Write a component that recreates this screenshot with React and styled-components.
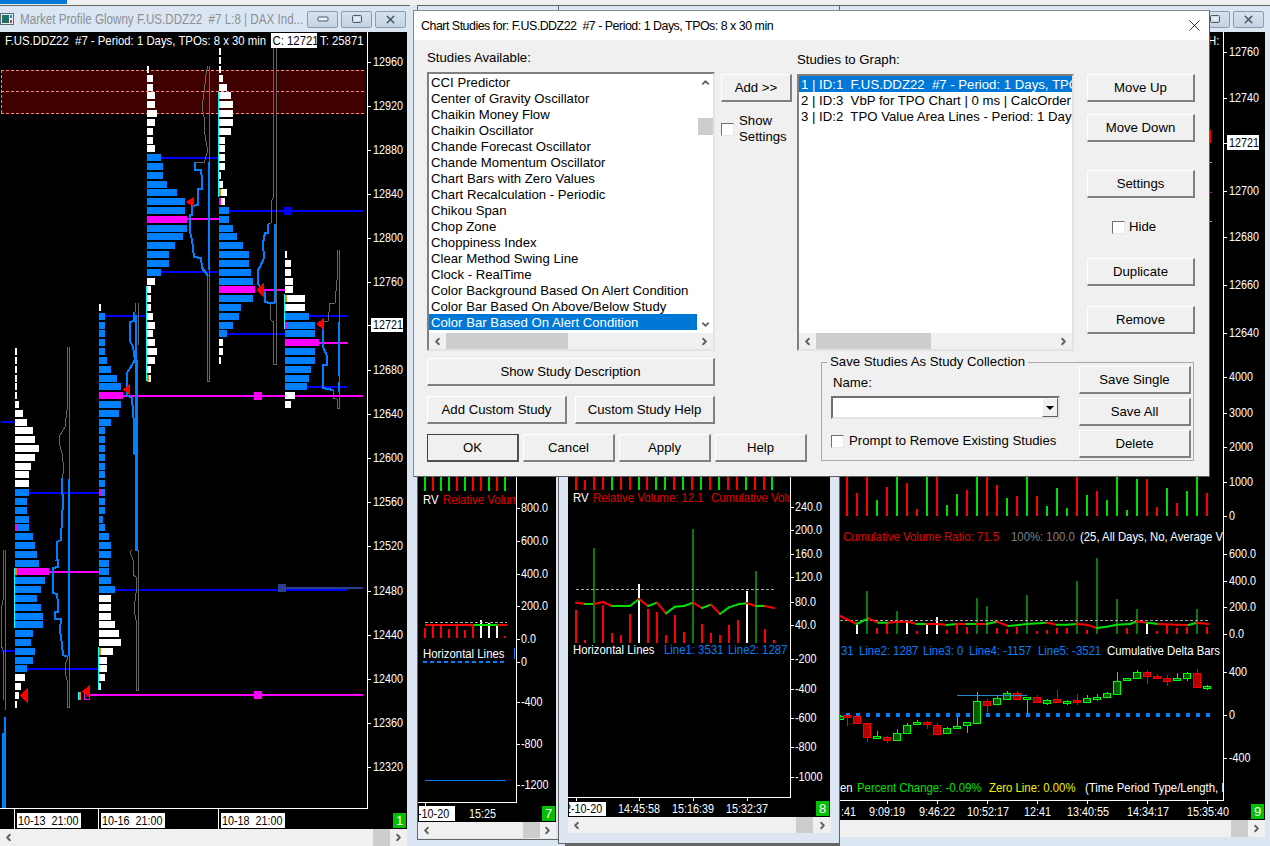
import React from 'react';
import styled, { createGlobalStyle } from 'styled-components';
import { ChevronLeft, ChevronRight, ChevronUp, ChevronDown, X } from 'lucide-react';

const FONT = '"Liberation Sans", Arial, sans-serif';

const GlobalStyle = createGlobalStyle`
    html, body { margin: 0; padding: 0; background: #dbe6f2; overflow: hidden; }
    body { font-family: ${FONT}; font-size: 13px; color: #000; }
    #root { width: 1270px; height: 846px; }
`;

const Desktop = styled.div`
    position: relative;
    width: 1270px;
    height: 846px;
    overflow: hidden;
    background: #dbe6f2;
`;

const TopStrip = styled.div`
    position: absolute;
    left: 0;
    top: 0;
    width: 1270px;
    height: 5px;
    background: #f0f0f0;
    &::before {
        content: '';
        display: block;
        width: 67px;
        height: 4px;
        background: #0078d7;
    }
`;

const Window = styled.div`
    position: absolute;
    left: ${p => p.$x}px;
    top: 5px;
    width: ${p => p.$w}px;
    height: ${p => p.$h}px;
    box-sizing: border-box;
    display: flex;
    flex-direction: column;
    background: #dbe6f2;
    border-top: 1px solid #666;
    border-left: ${p => (p.$edge ? '1px solid #666' : 'none')};
    border-bottom: ${p => (p.$edge ? '1px solid #666' : 'none')};
    padding: 0 ${p => p.$pr || 0}px 0 ${p => p.$pl || 0}px;
`;

const TitleBar = styled.div`
    height: 26px;
    flex: none;
    display: flex;
    align-items: center;
    gap: 6px;
    padding: 0 1px 0 0;
    color: #8b9096;
    font-size: 14px;
    white-space: pre;
    overflow: hidden;
`;

const TitleText = styled.span`
    flex: 1;
    min-width: 0;
    overflow: hidden;
`;

const TitleInner = styled.span`
    display: inline-block;
    transform: scaleX(0.83);
    transform-origin: 0 50%;
`;

const WinButton = styled.div`
    flex: none;
    width: 31px;
    height: 17px;
    box-sizing: border-box;
    display: flex;
    align-items: center;
    justify-content: center;
    margin-left: -3px;
    border: 1px solid #8a9cb0;
    border-radius: 2px;
    background: linear-gradient(#d6e1ee, #c4d3e4);
`;

const ChartSvg = styled.svg`
    flex: none;
    display: block;
    background: #000;
    shape-rendering: crispEdges;
`;

const Txt = styled.text`
    font-family: ${FONT};
    font-size: ${p => p.$s}px;
    fill: ${p => p.$c || '#fff'};
    white-space: pre;
    dominant-baseline: central;
    shape-rendering: auto;
`;

const ScrollH = styled.div`
    flex: none;
    height: ${p => p.$h || 17}px;
    display: flex;
    align-items: stretch;
    background: #f0f0f0;
    color: #606060;
`;

const ScrollArrow = styled.div`
    flex: none;
    width: 17px;
    display: flex;
    align-items: center;
    justify-content: center;
`;

const ScrollTrack = styled.div`
    flex: 1;
    min-width: 0;
    display: flex;
    align-items: stretch;
`;

const ScrollThumb = styled.div`
    flex: none;
    margin-left: ${p => p.$at}px;
    width: ${p => p.$len}px;
    background: #cdcdcd;
`;

const ScrollV = styled.div`
    flex: none;
    width: 15px;
    display: flex;
    flex-direction: column;
    background: #fff;
    color: #606060;
    margin-left: 1px;
`;

const ScrollVArrow = styled.div`
    flex: none;
    height: 17px;
    display: flex;
    align-items: center;
    justify-content: center;
`;

const ScrollVTrack = styled.div`
    flex: 1;
`;

const ScrollVThumb = styled.div`
    margin-top: ${p => p.$at}px;
    height: ${p => p.$len}px;
    background: #cdcdcd;
`;

const Backdrop = styled.div`
    position: absolute;
    left: 565px;
    top: 844px;
    width: 274px;
    height: 2px;
    background: #666;
`;

/* dialog */

const Dialog = styled.div`
    position: absolute;
    left: 413px;
    top: 10px;
    width: 797px;
    height: 467px;
    box-sizing: border-box;
    display: flex;
    flex-direction: column;
    background: #f0f0f0;
    border: 1px solid #5c5c5c;
    border-left-color: #8a8a8a;
    border-top-color: #8a8a8a;
`;

const DialogTitle = styled.div`
    height: 29px;
    flex: none;
    display: flex;
    align-items: center;
    justify-content: space-between;
    padding: 0 5px 0 7px;
    background: #fff;
    font-size: 12.4px;
    letter-spacing: -0.48px;
    white-space: pre;
`;

const DialogBody = styled.div`
    flex: 1;
    display: flex;
    flex-direction: column;
    padding: 10px 14px 0 13px;
    gap: 7px;
`;

const UpperRow = styled.div`
    display: grid;
    grid-template-columns: 294px 76px 290px 108px;
    height: 301px;
`;

const Column = styled.div`
    display: flex;
    flex-direction: column;
    min-width: 0;
    width: ${p => (p.$w ? `${p.$w}px` : 'auto')};
`;

const Label = styled.div`
    font-size: 13.2px;
    line-height: 16px;
    margin: ${p => p.$m || '0'};
    white-space: pre;
`;

const ListFrame = styled.div`
    box-sizing: border-box;
    height: ${p => p.$h}px;
    display: flex;
    flex-direction: column;
    background: #fff;
    border: 2px solid;
    border-color: #808080 #e3e3e3 #e3e3e3 #808080;
`;

const ListMain = styled.div`
    flex: 1;
    min-height: 0;
    display: flex;
`;

const ListItems = styled.div`
    flex: 1;
    min-width: 0;
    overflow: hidden;
`;

const ListItem = styled.div`
    height: 16px;
    line-height: 18px;
    padding-left: 2px;
    white-space: pre;
    overflow: hidden;
    font-size: 13.2px;
    background: ${p => (p.$on ? '#0078d7' : 'transparent')};
    color: ${p => (p.$on ? '#fff' : '#000')};
`;

const Btn = styled.div`
    box-sizing: border-box;
    width: ${p => (p.$w ? `${p.$w}px` : 'auto')};
    height: 28px;
    display: flex;
    align-items: center;
    justify-content: center;
    font-size: 13.2px;
    background: #f0f0f0;
    border: 2px solid;
    border-color: #fff #808080 #808080 #fff;
    border-top-width: 1px;
    border-left-width: 1px;
    margin-top: ${p => p.$mt || 0}px;
    flex: none;
    ${p => p.$def && 'border-color: #404040 #505050 #505050 #404040;'}
`;

const CheckBox = styled.span`
    flex: none;
    width: 11px;
    height: 11px;
    background: #fff;
    border: 1px solid;
    border-color: #707070 #e8e8e8 #e8e8e8 #707070;
`;

const CheckRow = styled.div`
    display: flex;
    align-items: center;
    gap: ${p => p.$gap || 5}px;
    margin: ${p => p.$m || '0'};
    font-size: 13.2px;
    line-height: 16px;
    white-space: pre;
`;

const LowerRow = styled.div`
    display: flex;
    justify-content: space-between;
    padding-right: 1px;
`;

const LowerLeft = styled.div`
    width: 380px;
    display: flex;
    flex-direction: column;
    gap: 10px;
`;

const ButtonRow = styled.div`
    display: flex;
    gap: ${p => p.$gap || 8}px;
`;

const Group = styled.fieldset`
    box-sizing: border-box;
    margin: -3px 0 0;
    width: 373px;
    height: 106px;
    padding: 0 2px 0 10px;
    border: 1px solid #aaa;
    display: flex;
    justify-content: space-between;
    min-width: 0;
`;

const Legend = styled.legend`
    font-size: 13.2px;
    padding: 0 3px;
    margin-left: -5px;
    line-height: 14px;
    white-space: pre;
`;

const GroupLeft = styled.div`
    width: 229px;
    margin-left: -1px;
    display: flex;
    flex-direction: column;
`;

const GroupRight = styled.div`
    width: 112px;
    display: flex;
    flex-direction: column;
    gap: 4px;
    margin-top: -3px;
`;

const Combo = styled.div`
    box-sizing: border-box;
    height: 23px;
    margin-top: 5px;
    display: flex;
    justify-content: flex-end;
    background: #fff;
    border: 2px solid;
    border-color: #707070 #e3e3e3 #e3e3e3 #707070;
`;

const ComboArrow = styled.div`
    width: 16px;
    box-sizing: border-box;
    display: flex;
    align-items: center;
    justify-content: center;
    background: #f0f0f0;
    border: 1px solid;
    border-color: #fff #606060 #606060 #fff;
    &::after {
        content: '';
        border-left: 4px solid transparent;
        border-right: 4px solid transparent;
        border-top: 4px solid #000;
    }
`;

/* chart data, read off the screen at page coordinates */

const BLUE = '#0080ff';
const MAG = '#ff00ff';
const WHITE = '#fff';
const NAVY = '#0000ff';
const CYAN = '#00ffff';
const ORANGE = '#ff8000';
const GRAY = '#666';
const RED = '#ff0000';
const GREEN = '#00e000';
const DKGREEN = '#0a7a0a';
const TXTRED = '#e00000';

const rowY = n => 66 + 8.815 * n;

// the chart text is a tall narrow face: squeeze it sideways
const T = ({ x, y, c, children }) => (
    <Txt transform={`translate(${x} ${y}) scale(0.855 1)`} $c={c} $s={13.3}>{children}</Txt>
);

const N = ({ x, y, c, children }) => (
    <Txt transform={`translate(${x} ${y}) scale(0.83 1)`} $c={c} $s={13}>{children}</Txt>
);

const profiles = [
    {
        x: 147, from: 0, marks: { 35: ORANGE },
        rows: [[WHITE, [2, 6, 6, 8, 8, 10, 8, 6, 6, 8]], [BLUE, [14, 16, 16, 20, 30, 38, 38]], [MAG, [40]], [BLUE, [40, 36, 28, 22, 22, 14]], [WHITE, [8, 4, 4, 4, 6, 8, 6, 8, 10, 8, 4, 4]]],
    },
    {
        x: 219, from: -2, marks: { 14: ORANGE, 15: MAG },
        rows: [[WHITE, [2, 2, 2, 4, 8, 12, 14, 14, 14, 12, 6, 6, 6, 6, 2, 4, 8, 6]], [BLUE, [10, 10, 14, 18, 24, 30, 30, 32, 34]], [MAG, [36]], [BLUE, [34, 22, 20, 14, 8]], [WHITE, [4, 4, 2]]],
    },
    {
        x: 285, from: 21, marks: { 26: ORANGE, 29: MAG },
        rows: [[WHITE, [2, 6, 6, 8, 8, 20, 20]], [BLUE, [24, 30, 30]], [MAG, [34]], [BLUE, [30, 30, 26, 24, 22]], [WHITE, [10, 6]]],
    },
    {
        x: 99, from: 27, marks: { 48: MAG, 66: ORANGE },
        rows: [[WHITE, [2]], [BLUE, [6, 6, 6, 6, 6, 8, 12, 18, 22]], [MAG, [24]], [BLUE, [22, 20, 12, 6, 6, 6, 6, 6, 6, 6, 6, 6, 6, 4, 6, 10, 12, 12, 10, 10, 12, 16]], [WHITE, [12, 12, 12, 16, 20, 22, 14, 8, 8, 6, 2]]],
    },
    {
        x: 15, from: 32, marks: { 52: MAG, 57: ORANGE },
        rows: [[WHITE, [2, 2, 2, 2, 2, 2, 4, 8, 12, 18, 20, 24, 20, 16, 14, 14]], [BLUE, [14, 12, 12, 14, 14, 18, 20, 22, 24]], [MAG, [34]], [BLUE, [30, 26, 22, 26, 28, 28, 18, 16, 20, 18, 12]], [WHITE, [10, 6, 4, 2]]],
    },
];

const cyanLines = [[146.5, 286, 381], [218.5, 92, 197], [284.5, 294, 329], [14.5, 568, 628], [98.5, 647, 690], [78.5, 692, 700]];

const levelLines = [
    [NAVY, 158, 161, 218], [NAVY, 211, 229, 363], [NAVY, 272, 161, 218], [NAVY, 316, 105, 146], [NAVY, 316, 309, 348],
    [NAVY, 334, 227, 285], [NAVY, 387, 307, 348], [NAVY, 422, 1, 15], [NAVY, 492.5, 29, 99], [NAVY, 590, 115, 348],
    ['#2b3f8f', 588, 286, 363], [NAVY, 650.5, 1, 15], [NAVY, 668.5, 27, 99],
    [MAG, 218.5, 187, 219], [MAG, 290, 258, 285], [MAG, 342.5, 319, 348], [MAG, 396, 123, 363], [MAG, 571.5, 49, 99], [MAG, 695, 88, 363],
];

const levelSquares = [[284, 207, NAVY], [254, 392, MAG], [278, 584, '#2b3f8f'], [254, 691, MAG]];

const triangles = [[186, 194, 197, 207], [256, 264, 283, 297], [123, 130, 384, 395], [316, 324, 318, 330], [20, 28, 688, 703], [82, 90, 685, 698]];

const grayPaths = [
    '207.5,66 206,75 204,93 202,107 204,117 205,135 207,147 207,153 204,163 195,162',
    '209.5,66 209.5,381 207.5,381 207.5,276 201,268',
    '273.5,48 273.5,197 272,200 271,223 268,224',
    '276,48 276,364 273.5,364 273.5,322 271,320 270,303',
    '337,250 337,280 335,303 330,303 328,321 323,322',
    '339,250 339,408 337,408 337,399 333,398 333,390',
    '135.5,303 135.5,312',
    '138,303 138,345',
    '138,550 138,690 136,690 136,620 134,610 136,593 136,577 133,575 133,560 130,552 132,550',
    '67,347 67,410 65,427 60,435 59,443 62,453 64,470 62,478',
    '69.5,347 69.5,707 67,707 67,680 65,672 65,665 68,657',
    '3,550 3,600 1,610 1,645 3,650 3,700',
    '5,550 5,710',
];

const bluePaths = [
    '195,162 195,170 201,170 202,180 202,189 198,189 198,205 192,206 192,215 190,215 190,232 192,240 194,257 201,258 202,267 208,276',
    '268,224 268,233 265,233 263,243 264,258 260,267 258,270 258,284 265,293 265,302 270,303 275,303',
    '323,322 323,347 327,356 327,365 323,365 323,388 333,390',
    '134,312 134,321 129.5,322 129.5,340 133,347 135,360 127,373 127,395 132,398 134,425 134,453 136,455',
    '62,478 62,493 63.5,497 62,517 61,540 57,542 57,550 56.5,560 58,560 58,567 53,568 53,593 57,594 58,603 58,612 55,612 55,619 61,619 60,630 62,645 63,655 68,657',
    '5,717 5,808',
    '2.5,733 2.5,808 5,808',
];

const blueBars = [[208.7, 162, 270], [275, 224, 303], [339, 322, 376], [339, 382, 392], [136, 315, 551], [68.5, 479, 656]];

const mainLabels = [
    ['12960', 61.5], ['12920', 105.5], ['12880', 149.7], ['12840', 193.5], ['12800', 237.5], ['12760', 281.5], ['12680', 369.5],
    ['12640', 413.5], ['12600', 457.5], ['12560', 501.5], ['12520', 545.5], ['12480', 590.5], ['12440', 634.5], ['12400', 678.5],
    ['12360', 722.5], ['12320', 766.7],
];

const AxisTicks = ({ x, labels, dx = 5 }) => (
    <>
        {labels.map(([t, y]) => (
            <g key={t + y}>
                <line x1={x} x2={x + 3} y1={Math.round(y) + 0.5} y2={Math.round(y) + 0.5} stroke="#fff" />
                <N x={x + dx} y={y}>{t}</N>
            </g>
        ))}
    </>
);

const Profile = ({ x, from, rows, marks }) => {
    let n = from;
    const out = [];
    rows.forEach(([color, widths]) => {
        widths.forEach(w => {
            const y = Math.round(rowY(n));
            out.push(<rect key={n} x={x} y={y} width={w} height={7} fill={color} />);
            if (marks[n]) out.push(<rect key={`m${n}`} x={x} y={y} width={2} height={7} fill={marks[n]} />);
            n += 1;
        });
    });
    return <>{out}</>;
};

const DateBox = ({ x, y, w, children }) => (
    <g>
        <rect x={x} y={y} width={w} height={15} fill="#fff" />
        <N x={x + 1} y={y + 7.5} c="#000">{children}</N>
    </g>
);

const Badge = ({ x, y, children }) => (
    <g>
        <rect x={x} y={y} width={13} height={15} fill="#00c000" />
        <Txt x={x + 6.5} y={y + 7.5} $s={13} textAnchor="middle">{children}</Txt>
    </g>
);

const MarketChart = () => (
    <ChartSvg width="407" height="797" viewBox="0 32 407 797">
        <rect x="1" y="70" width="364" height="44" fill="#400000" />
        {[70.5, 91.5, 113.5].map(y => (
            <line key={y} x1="1" x2="366" y1={y} y2={y} stroke="#ff8080" strokeDasharray="3 2" />
        ))}
        <line x1="1.5" x2="1.5" y1="70" y2="114" stroke="#ff8080" strokeDasharray="3 2" />
        {levelLines.map(([c, y, a, b]) => (
            <rect key={`${c}${y}${a}`} x={a} y={y - 1} width={b - a} height={2} fill={c} />
        ))}
        {grayPaths.map(d => (
            <polyline key={d} points={d} fill="none" stroke={GRAY} strokeWidth="1" />
        ))}
        {bluePaths.map(d => (
            <polyline key={d} points={d} fill="none" stroke={BLUE} strokeWidth="2" />
        ))}
        {blueBars.map(([x, a, b]) => (
            <rect key={`${x}${a}`} x={x - 1} y={a} width={2} height={b - a} fill={BLUE} />
        ))}
        <rect x="134.5" y="360" width="3" height="191" fill={BLUE} />
        {profiles.map(p => <Profile key={p.x} {...p} />)}
        {cyanLines.map(([x, a, b]) => (
            <rect key={x} x={Math.floor(x)} y={a} width={1} height={b - a} fill={CYAN} />
        ))}
        <rect x="79" y="692" width="2" height="8" fill={ORANGE} />
        <rect x="84.5" y="692.5" width="5" height="7" fill="none" stroke={MAG} />
        {levelSquares.map(([x, y, c]) => (
            <rect key={x + y} x={x} y={y} width={8} height={8} fill={c} />
        ))}
        {triangles.map(([a, b, t, u]) => (
            <polygon key={a} points={`${a},${(t + u) / 2} ${b},${t} ${b},${u}`} fill={RED} />
        ))}
        <T x="5" y="40.5">F.US.DDZ22  #7 - Period: 1 Days, TPOs: 8 x 30 min</T>
        <rect x="271" y="33" width="46" height="15" fill="#fff" />
        <T x="272.5" y="40.5" c="#000">C: 12721</T>
        <svg x="318" y="32" width="49" height="16" viewBox="318 32 49 16">
            <T x="320" y="40.5">T: 25871 0</T>
        </svg>
        <rect x="367" y="32" width="1" height="777" fill="#fff" />
        <rect x="0" y="808" width="368" height="1" fill="#fff" />
        <AxisTicks x={368} labels={mainLabels} />
        <rect x="371" y="318" width="32" height="14" fill="#fff" />
        <line x1="368" x2="371" y1="325.5" y2="325.5" stroke="#fff" />
        <N x="373" y="325" c="#000">12721</N>
        {[14, 98, 218].map(x => <rect key={x} x={x} y="809" width="1" height="20" fill="#fff" />)}
        <DateBox x={17} y={813} w={64}>10-13  21:00</DateBox>
        <DateBox x={101} y={813} w={64}>10-16  21:00</DateBox>
        <DateBox x={221} y={813} w={64}>10-18  21:00</DateBox>
        <Badge x={393} y={813}>1</Badge>
    </ChartSvg>
);

const z8 = (x, y) => [410 + x / 3, 470 + y / 3];
const z9 = (x, y) => [830 + x / 3, 470 + y / 3];

const Seg = ({ pts, w = 2 }) => (
    <g style={{ shapeRendering: 'auto' }}>
        {pts.slice(1).map((p, i) => (
            <line key={i} x1={pts[i][0]} y1={pts[i][1]} x2={p[0]} y2={p[1]} stroke={p[2]} strokeWidth={w} strokeLinecap="round" />
        ))}
    </g>
);

const Vbars = ({ bars, bottom, map, w = 2 }) => (
    <>
        {bars.map(([x, top, c]) => {
            const [px, py] = map(x, top);
            return <rect key={x} x={Math.round(px) - 1} y={py} width={w} height={bottom - py} fill={c} />;
        })}
    </>
);

const bars7top = [[45, GREEN], [69, RED], [93, GREEN], [117, GREEN], [141, RED], [165, GREEN], [189, RED], [213, RED], [237, GREEN], [261, RED], [285, GREEN]];
const bars7 = [[45, 473, RED], [69, 463, RED], [93, 463, RED], [117, 477, RED], [141, 463, RED], [165, 480, RED], [189, 463, RED], [213, 450, WHITE], [237, 460, WHITE], [261, 463, WHITE], [285, 498, RED]];

const Chart7 = () => (
    <ChartSvg width="138" height="790" viewBox="418 32 138 790">
        {bars7top.map(([x, c]) => (
            <rect key={x} x={Math.round(410 + x / 3) - 1} y="476" width="2" height="15" fill={c} />
        ))}
        <T x="423" y="500">RV</T>
        <svg x="418" y="490" width="98" height="20" viewBox="418 490 98 20">
            <T x="443" y="500" c={TXTRED}>Relative Volume: 12.1</T>
        </svg>
        <Vbars bars={bars7} bottom={638} map={z8} />
        <line x1="425" x2="507" y1="622.5" y2="622.5" stroke="#aaa" strokeDasharray="3 2" />
        <rect x="425" y="624" width="49" height="2" fill={RED} />
        <rect x="474" y="624" width="23" height="2" fill={GREEN} />
        <rect x="497" y="624" width="10" height="2" fill={RED} />
        <T x="423" y="654">Horizontal Lines</T>
        <rect x="514" y="648" width="1" height="11" fill={BLUE} />
        <line x1="423" x2="507" y1="661.5" y2="661.5" stroke={BLUE} strokeWidth="2" strokeDasharray="4 3" />
        <line x1="425" x2="506" y1="780.5" y2="780.5" stroke={BLUE} />
        <rect x="516" y="32" width="1" height="771" fill="#fff" />
        <rect x="418" y="802" width="99" height="1" fill="#fff" />
        <AxisTicks
            x={517}
            dx={4}
            labels={[['800.0', 508], ['600.0', 541], ['400.0', 574], ['200.0', 606], ['0.0', 639], ['0', 662], ['-400', 702], ['-800', 744], ['-1200', 785]]}
        />
        <rect x="425" y="803" width="1" height="3" fill="#fff" />
        <svg x="419" y="806" width="36" height="15" viewBox="0 0 36 15">
            <rect width="36" height="15" fill="#fff" />
            <N x="-1" y="7.5" c="#000">-10-20</N>
        </svg>
        <N x="469" y="813.5">15:25</N>
        <Badge x={542} y={806}>7</Badge>
    </ChartSvg>
);

const top8 = ['r', 'r', 'r', 'r', 'g', 'r', 'r', 'g', 'r', 'g', 'g', 'r', 'g', 'r', 'g', 'r', 'g', 'r', 'r', 'g', 'r', 'r', 'g'];
const bars8 = [[498, 420, RED], [525, 510, RED], [552, 235, DKGREEN], [579, 405, RED], [606, 490, RED], [633, 495, RED], [660, 432, RED], [687, 342, WHITE], [714, 417, RED], [741, 426, RED], [768, 495, RED], [795, 435, RED], [822, 487, RED], [849, 178, DKGREEN], [876, 462, RED], [903, 490, RED], [930, 495, RED], [957, 465, RED], [984, 450, RED], [1011, 363, WHITE], [1038, 303, DKGREEN], [1065, 477, RED], [1092, 510, RED]];
const line8 = [[498, 398], [525, 402, RED], [552, 402, GREEN], [579, 396, RED], [606, 408, RED], [633, 408, GREEN], [660, 408, GREEN], [687, 387, GREEN], [714, 408, RED], [741, 398, GREEN], [768, 430, RED], [795, 410, GREEN], [822, 408, GREEN], [849, 398, GREEN], [876, 414, RED], [903, 404, GREEN], [930, 432, RED], [957, 412, GREEN], [984, 403, GREEN], [1011, 400, GREEN], [1038, 408, RED], [1065, 408, GREEN], [1092, 414, RED]];

const Chart8 = () => (
    <ChartSvg width="262" height="785" viewBox="568 32 262 785">
        {top8.map((c, i) => {
            const x = 576 + i * 8.93;
            return <rect key={i} x={Math.round(x) - 1} y={i === 1 ? 480 : 476} width="2" height={i === 1 ? 10 : 14} fill={c === 'r' ? RED : GREEN} />;
        })}
        <T x="573" y="498">RV</T>
        <T x="593" y="498" c={TXTRED}>Relative Volume: 12.1</T>
        <svg x="568" y="488" width="222" height="20" viewBox="568 488 222 20">
            <T x="711" y="498" c={TXTRED}>Cumulative Volume Ratio</T>
        </svg>
        <Vbars bars={bars8} bottom={643} map={z8} />
        <line x1="576" x2="775" y1="589.5" y2="589.5" stroke="#aaa" strokeDasharray="3 2" />
        <Seg pts={line8.map(([x, y, c]) => [...z8(x, y), c])} />
        <T x="573" y="650">Horizontal Lines</T>
        <T x="664" y="650" c={BLUE}>Line1: 3531</T>
        <T x="728" y="650" c={BLUE}>Line2: 1287</T>
        <rect x="790" y="32" width="1" height="766" fill="#fff" />
        <rect x="568" y="797" width="223" height="1" fill="#fff" />
        <AxisTicks
            x={791}
            dx={4}
            labels={[['240.0', 507], ['200.0', 530], ['160.0', 554], ['120.0', 577], ['80.0', 601.5], ['40.0', 624.5], ['-200', 659], ['-400', 689], ['-600', 718], ['-800', 747], ['-1000', 777]]}
        />
        {[576, 639, 693, 747].map(x => <rect key={x} x={x} y="798" width="1" height="3" fill="#fff" />)}
        <svg x="569" y="802" width="37" height="14" viewBox="0 0 37 14">
            <rect width="37" height="14" fill="#fff" />
            <N x="-4" y="7" c="#000">2-10-20</N>
        </svg>
        <N x="618" y="809">14:45:58</N>
        <N x="672" y="809">15:16:39</N>
        <N x="726" y="809">15:32:37</N>
        <Badge x={816} y={801}>8</Badge>
    </ChartSvg>
);

const top9 = [[50, 20, 'r'], [80, 70, 'r'], [110, 20, 'r'], [140, 90, 'g'], [170, 50, 'r'], [200, 20, 'g'], [230, 40, 'r'], [260, 118, 'r'], [290, 20, 'g'], [320, 20, 'r'], [350, 105, 'g'], [380, 72, 'g'], [410, 60, 'r'], [440, 20, 'g'], [470, 20, 'r'], [500, 45, 'r'], [530, 85, 'g'], [560, 78, 'r'], [590, 20, 'g'], [620, 78, 'r'], [650, 108, 'g'], [680, 55, 'g'], [710, 113, 'g'], [740, 20, 'r'], [770, 75, 'g'], [800, 63, 'r'], [830, 90, 'g'], [860, 20, 'g'], [890, 120, 'g'], [920, 28, 'g'], [950, 28, 'r'], [980, 110, 'r'], [1010, 55, 'g'], [1040, 100, 'r'], [1070, 63, 'g'], [1100, 20, 'g'], [1130, 70, 'r']];
const bars9 = [[80, 465, WHITE], [110, 363, DKGREEN], [140, 473, RED], [170, 460, RED], [200, 423, DKGREEN], [230, 455, WHITE], [260, 483, RED], [290, 458, WHITE], [320, 440, WHITE], [350, 480, RED], [380, 465, RED], [410, 470, RED], [440, 385, DKGREEN], [470, 408, DKGREEN], [500, 473, RED], [530, 478, RED], [560, 470, RED], [590, 375, DKGREEN], [620, 483, RED], [650, 480, RED], [680, 475, RED], [710, 473, RED], [740, 333, DKGREEN], [770, 480, RED], [800, 265, DKGREEN], [860, 387, DKGREEN], [890, 473, RED], [920, 417, DKGREEN], [950, 455, WHITE], [980, 483, RED], [1010, 462, RED], [1040, 473, RED], [1070, 470, RED], [1100, 417, DKGREEN], [1130, 470, RED]];
const line9 = [[30, 438], [80, 462, RED], [115, 445, GREEN], [145, 458, RED], [175, 458, GREEN], [205, 455, RED], [235, 455, RED], [260, 462, RED], [290, 462, GREEN], [320, 462, RED], [350, 465, RED], [380, 462, GREEN], [410, 462, RED], [440, 462, GREEN], [470, 462, RED], [500, 455, GREEN], [535, 468, RED], [590, 462, GREEN], [650, 458, GREEN], [680, 464, RED], [710, 464, GREEN], [740, 462, GREEN], [770, 464, RED], [800, 474, RED], [830, 470, GREEN], [860, 464, GREEN], [900, 462, GREEN], [920, 454, GREEN], [950, 458, RED], [985, 462, GREEN], [1040, 464, RED], [1075, 465, RED], [1100, 458, GREEN], [1135, 462, RED]];

// x, wick top, wick bottom, body top, body bottom, colour (3x zoom coordinates)
const candles = [[30, 195, 210, 197, 207, 'g'], [52, 195, 228, 195, 200, 'r'], [82, 198, 220, 198, 220, 'r'], [112, 220, 275, 220, 262, 'r'], [142, 243, 265, 258, 263, 'g'], [172, 258, 278, 260, 268, 'r'], [202, 238, 272, 248, 268, 'g'], [232, 218, 248, 224, 248, 'g'], [262, 210, 222, 215, 220, 'g'], [292, 214, 238, 217, 224, 'r'], [322, 220, 250, 224, 250, 'r'], [352, 232, 250, 234, 250, 'g'], [382, 200, 233, 227, 233, 'g'], [412, 215, 250, 217, 227, 'g'], [442, 125, 222, 152, 217, 'g'], [472, 148, 188, 152, 163, 'r'], [502, 138, 164, 145, 163, 'g'], [532, 122, 150, 128, 146, 'g'], [562, 124, 148, 128, 146, 'r'], [592, 140, 190, 142, 147, 'g'], [622, 136, 158, 142, 157, 'r'], [652, 146, 165, 149, 157, 'g'], [682, 120, 158, 148, 157, 'r'], [712, 150, 165, 152, 158, 'g'], [742, 132, 165, 151, 156, 'r'], [772, 135, 160, 143, 155, 'g'], [802, 132, 152, 141, 143, 'g'], [832, 126, 143, 130, 142, 'g'], [862, 66, 130, 92, 130, 'g'], [892, 84, 92, 85, 92, 'g'], [922, 60, 86, 67, 85, 'g'], [952, 60, 102, 67, 80, 'r'], [982, 72, 84, 78, 83, 'r'], [1012, 76, 108, 83, 92, 'r'], [1042, 70, 92, 85, 92, 'g'], [1072, 66, 92, 70, 86, 'g'], [1102, 58, 112, 70, 112, 'r'], [1132, 105, 120, 108, 113, 'g']];

const Candle = ({ d }) => {
    const [x, wt, wb, bt, bb, c] = d;
    const px = Math.round(830 + x / 3);
    const edge = c === 'g' ? '#00ff00' : '#ff0000';
    const fill = c === 'g' ? '#006000' : '#b00000';
    const t = 650 + bt / 3;
    const h = Math.max((bb - bt) / 3, 2);
    return (
        <g>
            <rect x={px} y={650 + wt / 3} width="1" height={(wb - wt) / 3} fill={edge} />
            <rect x={px - 3.5} y={Math.round(t) + 0.5} width="7" height={Math.round(h)} fill={fill} stroke={edge} />
        </g>
    );
};

const dots = Array.from({ length: 37 }, (_, i) => 846 + i * 10);

const Chart9 = () => (
    <ChartSvg width="425" height="788" viewBox="840 32 425 788">
        <T x="1208" y="41">H:</T>
        <rect x="1209" y="130" width="2" height="13" fill={RED} />
        <rect x="1209" y="162" width="3" height="1" fill="#aaa" />
        <rect x="1209" y="192" width="3" height="1" fill="#c000c0" />
        <rect x="1209" y="221" width="3" height="1" fill="#aaa" />
        {top9.map(([x, t, c]) => {
            const [px, py] = z9(x, t);
            return <rect key={x} x={Math.round(px) - 1} y={t === 20 ? 476 : py} width="2" height={516 - (t === 20 ? 476 : py)} fill={c === 'r' ? RED : GREEN} />;
        })}
        <svg x="840" y="527" width="383" height="20" viewBox="840 527 383 20">
            <T x="843" y="537" c={TXTRED}>Cumulative Volume Ratio: 71.5</T>
            <T x="1011" y="537" c="#808080">100%: 100.0</T>
            <T x="1080" y="537">(25, All Days, No, Average Volume)</T>
        </svg>
        <Vbars bars={bars9} bottom={634} map={z9} />
        <line x1="840" x2="1210" y1="620.5" y2="620.5" stroke="#aaa" strokeDasharray="3 2" />
        <Seg pts={line9.map(([x, y, c]) => [...z9(x, y), c])} />
        <svg x="840" y="641" width="383" height="20" viewBox="840 641 383 20">
            <T x="841" y="651" c={BLUE}>31</T>
            <T x="859" y="651" c={BLUE}>Line2: 1287</T>
            <T x="923" y="651" c={BLUE}>Line3: 0</T>
            <T x="969" y="651" c={BLUE}>Line4: -1157</T>
            <T x="1038" y="651" c={BLUE}>Line5: -3521</T>
            <T x="1107" y="651">Cumulative Delta Bars - Volume</T>
        </svg>
        {dots.map(x => <rect key={x} x={x} y="713" width="4" height="4" fill={BLUE} />)}
        {candles.map(d => <Candle key={d[0]} d={d} />)}
        <rect x="957" y="695" width="70" height="1" fill="#2a8ad0" />
        <svg x="840" y="778" width="383" height="20" viewBox="840 778 383 20">
            <T x="840" y="788">en</T>
            <T x="857" y="788" c="#00e000">Percent Change: -0.09%</T>
            <T x="989" y="788" c="#f0f000">Zero Line: 0.00%</T>
            <T x="1085" y="788">(Time Period Type/Length, Base)</T>
        </svg>
        <rect x="1223" y="32" width="1" height="769" fill="#fff" />
        <rect x="840" y="800" width="384" height="1" fill="#fff" />
        <AxisTicks
            x={1224}
            labels={[['12760', 51.7], ['12740', 98], ['12700', 191], ['12680', 237], ['12660', 285], ['12640', 332.6], ['4000', 377], ['3000', 412.7], ['2000', 446.7], ['1000', 481.5], ['0', 516], ['600.0', 554], ['400.0', 580.7], ['200.0', 607], ['0.0', 634], ['400', 671.7], ['0', 715], ['-400', 758]]}
        />
        <line x1="1224" x2="1227" y1="143.5" y2="143.5" stroke="#fff" />
        <rect x="1227" y="135" width="32" height="15" fill="#fff" />
        <N x="1229" y="142.5" c="#000">12721</N>
        {[887, 937, 987, 1037, 1087, 1147, 1207].map(x => <rect key={x} x={x} y="801" width="1" height="3" fill="#fff" />)}
        <N x="841" y="811.7">:41</N>
        <N x="869" y="811.7">9:09:19</N>
        <N x="919" y="811.7">9:46:22</N>
        <N x="967" y="811.7">10:52:17</N>
        <N x="1024" y="811.7">12:41</N>
        <N x="1067" y="811.7">13:40:55</N>
        <N x="1127" y="811.7">14:34:17</N>
        <N x="1187" y="811.7">15:35:40</N>
        <Badge x={1251} y={804}>9</Badge>
    </ChartSvg>
);

const AppIcon = () => (
    <svg width="14" height="14" viewBox="0 0 14 14">
        <rect x="0.5" y="1.5" width="13" height="11" fill="#e8eef0" stroke="#5a6a70" />
        <rect x="2" y="3" width="7" height="8" fill="#1d6f6a" />
        <rect x="10" y="3" width="2" height="3" fill="#2a7fd0" />
        <rect x="10" y="8" width="2" height="3" fill="#c04040" />
    </svg>
);

const MinIcon = () => (
    <svg width="12" height="6" viewBox="0 0 12 6">
        <rect x="1" y="1" width="10" height="4" rx="1" fill="#eef2f7" stroke="#4d5a68" />
    </svg>
);

const RestoreIcon = () => (
    <svg width="12" height="10" viewBox="0 0 12 10">
        <rect x="1.5" y="1.5" width="9" height="7" rx="1" fill="none" stroke="#4d5a68" />
        <rect x="3.5" y="3.5" width="5" height="3" fill="#eef2f7" />
    </svg>
);

const CloseIcon = () => <X size={13} strokeWidth={3} color="#4d5a68" />;

// the titles of the other windows lie behind the dialog, so only the first one has text
const ChartTitle = ({ text }) => (
    <TitleBar>
        <AppIcon />
        <TitleText>{text && <TitleInner>{text}</TitleInner>}</TitleText>
        <WinButton><MinIcon /></WinButton>
        <WinButton><RestoreIcon /></WinButton>
        <WinButton><CloseIcon /></WinButton>
    </TitleBar>
);

const HScroll = ({ at, len, h, left = true, right = true }) => (
    <ScrollH $h={h}>
        {left && <ScrollArrow><ChevronLeft size={11} strokeWidth={4} /></ScrollArrow>}
        <ScrollTrack><ScrollThumb $at={at} $len={len} /></ScrollTrack>
        {right && <ScrollArrow><ChevronRight size={11} strokeWidth={4} /></ScrollArrow>}
    </ScrollH>
);

const available = [
    'CCI Predictor', 'Center of Gravity Oscillator', 'Chaikin Money Flow', 'Chaikin Oscillator', 'Chande Forecast Oscillator',
    'Chande Momentum Oscillator', 'Chart Bars with Zero Values', 'Chart Recalculation - Periodic', 'Chikou Span', 'Chop Zone',
    'Choppiness Index', 'Clear Method Swing Line', 'Clock - RealTime', 'Color Background Based On Alert Condition',
    'Color Bar Based On Above/Below Study', 'Color Bar Based On Alert Condition',
];

const toGraph = [
    '1 | ID:1  F.US.DDZ22  #7 - Period: 1 Days, TPOs: 8 x 30 min',
    '2 | ID:3  VbP for TPO Chart | 0 ms | CalcOrder: 2',
    '3 | ID:2  TPO Value Area Lines - Period: 1 Days',
];

const StudiesDialog = () => (
    <Dialog>
        <DialogTitle>
            <span>Chart Studies for: F.US.DDZ22  #7 - Period: 1 Days, TPOs: 8 x 30 min</span>
            <X size={19} strokeWidth={1} />
        </DialogTitle>
        <DialogBody>
            <UpperRow>
                <Column $w={288}>
                    <Label $m="0 0 6px">Studies Available:</Label>
                    <ListFrame $h={279}>
                        <ListMain>
                            <ListItems>
                                {available.map((s, i) => <ListItem key={s} $on={i === 15}>{s}</ListItem>)}
                            </ListItems>
                            <ScrollV>
                                <ScrollVArrow><ChevronUp size={11} strokeWidth={4} /></ScrollVArrow>
                                <ScrollVTrack><ScrollVThumb $at={27} $len={17} /></ScrollVTrack>
                                <ScrollVArrow><ChevronDown size={11} strokeWidth={4} /></ScrollVArrow>
                            </ScrollV>
                        </ListMain>
                        <HScroll at={0} len={122} h={16} />
                    </ListFrame>
                </Column>
                <Column $w={71}>
                    <Btn $mt={24}>Add &gt;&gt;</Btn>
                    <CheckRow $m="11px 0 0"><CheckBox />{'Show\nSettings'}</CheckRow>
                </Column>
                <Column $w={277}>
                    <Label $m="2px 0 6px">Studies to Graph:</Label>
                    <ListFrame $h={277}>
                        <ListMain>
                            <ListItems>
                                {toGraph.map((s, i) => <ListItem key={s} $on={i === 0}>{s}</ListItem>)}
                            </ListItems>
                        </ListMain>
                        <HScroll at={0} len={115} h={16} />
                    </ListFrame>
                </Column>
                <Column $w={108}>
                    <Btn $mt={24}>Move Up</Btn>
                    <Btn $mt={12}>Move Down</Btn>
                    <Btn $mt={28}>Settings</Btn>
                    <CheckRow $gap={4} $m="21px 0 0 25px"><CheckBox />Hide</CheckRow>
                    <Btn $mt={23}>Duplicate</Btn>
                    <Btn $mt={20}>Remove</Btn>
                </Column>
            </UpperRow>
            <LowerRow>
                <LowerLeft>
                    <Btn $w={288}>Show Study Description</Btn>
                    <ButtonRow>
                        <Btn $w={140}>Add Custom Study</Btn>
                        <Btn $w={140}>Custom Study Help</Btn>
                    </ButtonRow>
                    <ButtonRow $gap={4}>
                        <Btn $w={92} $def>OK</Btn>
                        <Btn $w={92}>Cancel</Btn>
                        <Btn $w={92}>Apply</Btn>
                        <Btn $w={92}>Help</Btn>
                    </ButtonRow>
                </LowerLeft>
                <Group>
                    <Legend>Save Studies As Study Collection</Legend>
                    <GroupLeft>
                        <Label $m="6px 0 0 2px">Name:</Label>
                        <Combo><ComboArrow /></Combo>
                        <CheckRow $m="14px 0 0"><CheckBox />Prompt to Remove Existing Studies</CheckRow>
                    </GroupLeft>
                    <GroupRight>
                        <Btn>Save Single</Btn>
                        <Btn>Save All</Btn>
                        <Btn>Delete</Btn>
                    </GroupRight>
                </Group>
            </LowerRow>
        </DialogBody>
    </Dialog>
);

const App = () => (
    <Desktop>
        <GlobalStyle />
        <TopStrip />
        <Window $x={0} $w={410} $h={841} $pr={3}>
            <ChartTitle text="Market Profile Glowny F.US.DDZ22  #7 L:8 | DAX Ind..." />
            <MarketChart />
            <HScroll at={356} len={17} h={17} />
        </Window>
        <Window $x={417} $w={141} $h={835} $edge $pr={2}>
            <ChartTitle />
            <Chart7 />
            <HScroll at={88} len={17} h={16} />
        </Window>
        <Window $x={558} $w={282} $h={839} $edge $pl={9} $pr={9}>
            <ChartTitle />
            <Chart8 />
            <HScroll at={211} len={17} h={16} />
        </Window>
        <Backdrop />
        <Window $x={839} $w={431} $h={842} $edge $pr={5}>
            <ChartTitle />
            <Chart9 />
            <HScroll at={391} len={17} h={17} left={false} />
        </Window>
        <StudiesDialog />
    </Desktop>
);

export default App;
